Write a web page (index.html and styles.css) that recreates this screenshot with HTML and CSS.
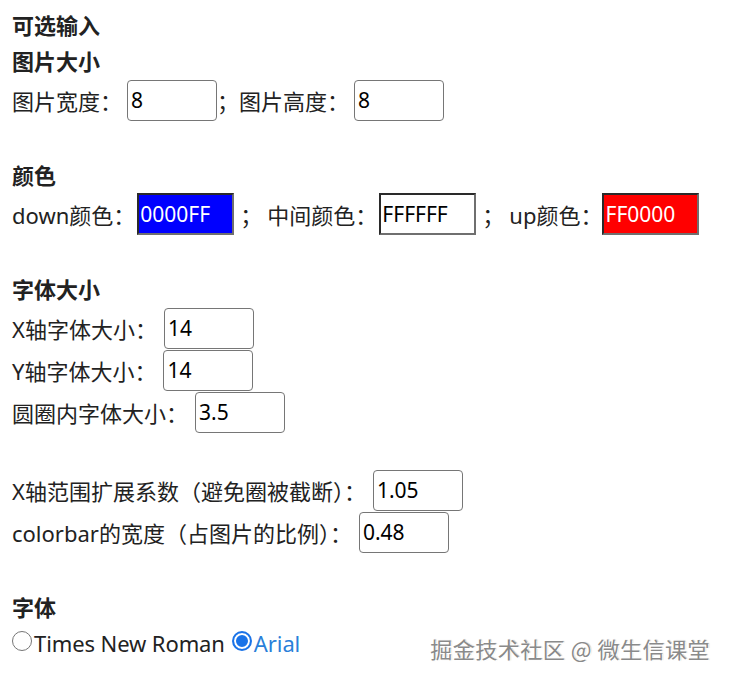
FILE: index.html
```html
<!DOCTYPE html>
<html lang="zh-CN">
<head>
    <meta charset="UTF-8">
    <meta name="viewport" content="width=device-width, initial-scale=1.0">
    <title>可选输入</title>
    <link rel="stylesheet" href="styles.css">
</head>
<body>
    <div class="panel">
        <div class="title">可选输入</div>

        <div class="title">图片大小</div>
        <div class="row">
            图片宽度：<input class="num" type="text" value="8">；图片高度：<input class="num" type="text" value="8">
        </div>
        <div class="blank"></div>

        <div class="title">颜色</div>
        <div class="row">
            down颜色：<input class="color color-down" type="text" value="0000FF"><span class="sep">；</span>中间颜色：<input class="color color-mid" type="text" value="FFFFFF"><span class="sep">；</span>up颜色：<input class="color color-up tight" type="text" value="FF0000">
        </div>
        <div class="blank"></div>

        <div class="title">字体大小</div>
        <div class="row">X轴字体大小：<input class="num wide" type="text" value="14"></div>
        <div class="row">Y轴字体大小：<input class="num wide" type="text" value="14"></div>
        <div class="row">圆圈内字体大小：<input class="num wide" type="text" value="3.5"></div>
        <div class="blank"></div>

        <div class="row">X轴范围扩展系数（避免圈被截断）：<input class="num wide" type="text" value="1.05"></div>
        <div class="row">colorbar的宽度（占图片的比例）：<input class="num wide" type="text" value="0.48"></div>
        <div class="blank"></div>

        <div class="title">字体</div>
        <div class="radios">
            <label class="opt"><input type="radio" name="font" value="times">Times New Roman</label>
            <label class="opt"><input type="radio" name="font" value="arial" checked>Arial</label>
        </div>
    </div>

    <div class="watermark">掘金技术社区 @ 微生信课堂</div>
</body>
</html>
```

FILE: styles.css
```css
body {
    margin: 0;
    padding: 7px 12px;
    font-family: "Noto Sans", "Noto Sans CJK SC", sans-serif;
    font-size: 22px;
    color: #222;
    background: #fff;
}
.title {
    font-weight: bold;
    height: 36px;
    line-height: 36px;
}
.row {
    display: flex;
    align-items: center;
    height: 42px;
    white-space: nowrap;
}
.blank {
    height: 36px;
}
input {
    font-family: inherit;
    font-size: 21px;
    box-sizing: border-box;
    margin: 0 0 0 5px;
}
.num {
    width: 90px;
    height: 41px;
    padding: 0 3px;
    border: 1px solid #767676;
    border-radius: 4px;
    color: #000;
    background: #fff;
}
.num.wide {
    margin-left: 7px;
}
.color {
    width: 97px;
    height: 42px;
    margin-left: 2px;
    padding: 0 1px;
    border: 2px solid;
    border-color: #2a2a2a #6f6f6f #6f6f6f #2a2a2a;
}
.color.tight {
    margin-left: 0;
}
.sep {
    margin: 0 5px 0 6px;
}
.color-down {
    background: #0000ff;
    color: #fff;
}
.color-mid {
    background: #fff;
    color: #000;
}
.color-up {
    background: #ff0000;
    color: #fff;
}
.radios {
    display: flex;
    align-items: center;
    height: 36px;
}
.opt {
    display: flex;
    align-items: center;
    margin-right: 7px;
    letter-spacing: -0.1px;
}
.opt input {
    appearance: none;
    width: 20px;
    height: 20px;
    margin: 0 2px 4px 0;
    border: 1.5px solid #767676;
    border-radius: 50%;
    background: #fff;
}
.opt input:checked {
    border: 2px solid #1a73e8;
    box-shadow: inset 0 0 0 2px #fff, inset 0 0 0 10px #1a73e8;
}
.opt:has(input:checked) {
    color: #2a7fd9;
}
.watermark {
    position: absolute;
    right: 21px;
    top: 632px;
    font-family: "Noto Sans CJK SC", sans-serif;
    font-size: 22px;
    color: #8a8a8a;
    text-shadow: 1px 1px 0 #fff, -1px -1px 0 #fff, 1px 0 1px #bbb;
    letter-spacing: 0.5px;
}
```
